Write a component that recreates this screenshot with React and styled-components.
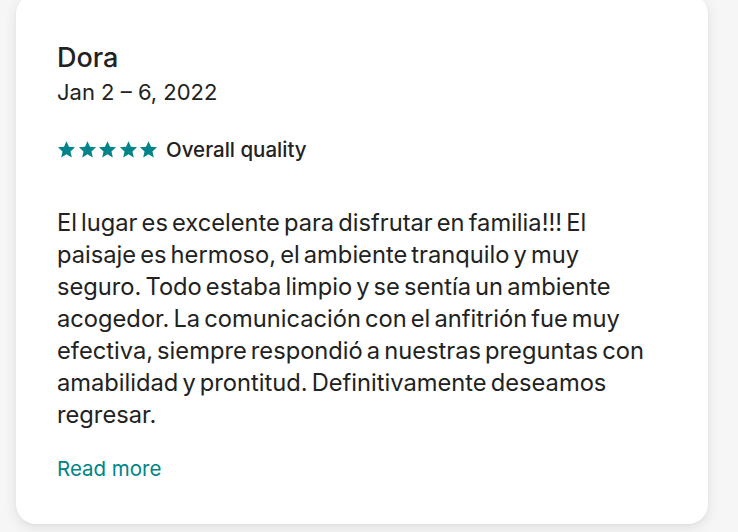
import React from "react";
import styled, { createGlobalStyle } from "styled-components";

const Global = createGlobalStyle`
  html, body { margin: 0; padding: 0; }
  body {
    background: #f6f6f6;
    font-family: "Inter", "Noto Sans", sans-serif;
    color: #222222;
    -webkit-font-smoothing: antialiased;
  }
`;

const Page = styled.div`
  width: 738px;
  height: 532px;
  overflow: hidden;
  padding: 0 30px 0 16px;
  box-sizing: border-box;
`;

const Card = styled.article`
  margin-top: -6px;
  height: 530px;
  box-sizing: border-box;
  background: #ffffff;
  border-radius: 20px;
  box-shadow: 0 4px 14px rgba(0, 0, 0, 0.09), 0 1px 3px rgba(0, 0, 0, 0.04);
  padding: 48px 44px 0 41px;
  display: flex;
  flex-direction: column;
`;

const Name = styled.h2`
  margin: 0;
  font-size: 27px;
  font-weight: 500;
  line-height: 32px;
  color: #222;
`;

const DateLine = styled.div`
  font-size: 22px;
  font-weight: 400;
  line-height: 32px;
  margin-top: 2px;
  color: #222;
`;

const Rating = styled.div`
  display: flex;
  align-items: center;
  gap: 8px;
  margin-top: 29px;
`;

const Stars = styled.div`
  display: flex;
  gap: 1.5px;
`;

const Label = styled.span`
  font-size: 20.5px;
  font-weight: 500;
  color: #222;
`;

const Body = styled.p`
  margin: 45px 0 0;
  font-size: 23.7px;
  line-height: 32px;
  word-spacing: -2.6px;
  color: #222;
`;

const ReadMore = styled.a`
  margin-top: 25px;
  font-size: 20.5px;
  color: #00848a;
  text-decoration: none;
`;

const Star = () => (
  <svg width="19" height="19" viewBox="0 0 24 24">
    <path
      fill="#00848a"
      d="M12 1.5l3.1 7.1 7.7.7-5.8 5.1 1.7 7.6L12 18l-6.7 4 1.7-7.6-5.8-5.1 7.7-.7z"
    />
  </svg>
);

export default function App() {
  return (
    <>
      <Global />
      <Page>
        <Card>
          <Name>Dora</Name>
          <DateLine>Jan 2 – 6, 2022</DateLine>
          <Rating>
            <Stars>
              {[0, 1, 2, 3, 4].map((i) => (
                <Star key={i} />
              ))}
            </Stars>
            <Label>Overall quality</Label>
          </Rating>
          <Body>
            El lugar es excelente para disfrutar en familia!!! El paisaje es
            hermoso, el ambiente tranquilo y muy seguro. Todo estaba limpio y se
            sentía un ambiente acogedor. La comunicación con el anfitrión fue muy
            efectiva, siempre respondió a nuestras preguntas con amabilidad y
            prontitud. Definitivamente deseamos regresar.
          </Body>
          <ReadMore href="#">Read more</ReadMore>
        </Card>
      </Page>
    </>
  );
}
